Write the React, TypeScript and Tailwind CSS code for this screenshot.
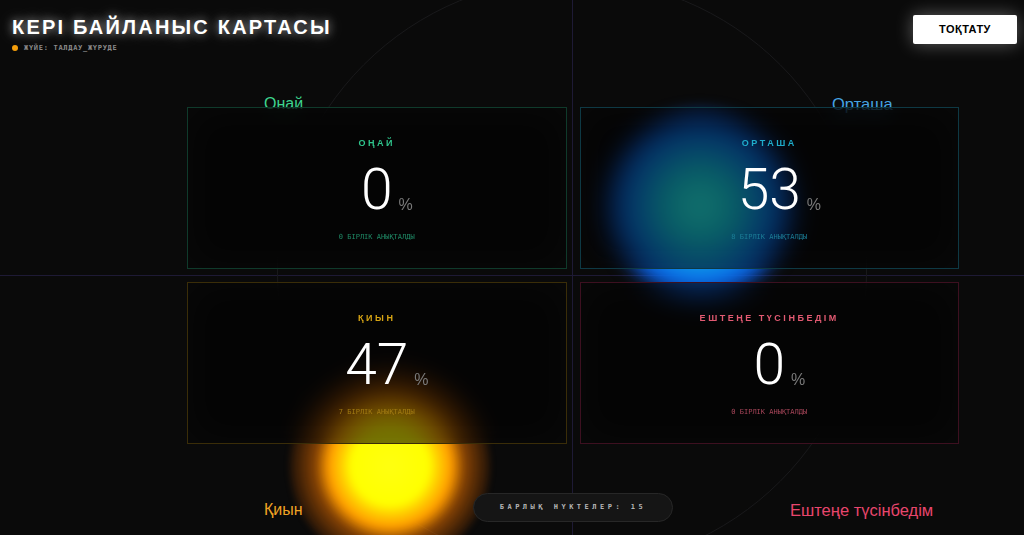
import React from 'react';

type Zone = {
  title: string;
  value: number;
  count: number;
  border: string;
  titleColor: string;
  subColor: string;
};

const zones: Zone[] = [
  { title: 'ОҢАЙ', value: 0, count: 0, border: 'border-[#0f3a2b]', titleColor: 'text-[#2fc48c]', subColor: 'text-[#1f8a66]' },
  { title: 'ОРТАША', value: 53, count: 8, border: 'border-[#0e3944]', titleColor: 'text-[#1eaccb]', subColor: 'text-[#1b7d96]' },
  { title: 'ҚИЫН', value: 47, count: 7, border: 'border-[#3a2d08]', titleColor: 'text-[#d6a414]', subColor: 'text-[#a07a12]' },
  { title: 'ЕШТЕҢЕ ТҮСІНБЕДІМ', value: 0, count: 0, border: 'border-[#3d1020]', titleColor: 'text-[#e25a72]', subColor: 'text-[#a8465a]' },
];

const ZoneCard: React.FC<{ zone: Zone }> = ({ zone }) => (
  <div
    className={`h-[162px] border ${zone.border} bg-black/55 backdrop-blur-[10px] shadow-[inset_0_0_40px_rgba(255,255,255,0.02)] flex flex-col items-center pt-[29px]`}
  >
    <div className={`text-[9px] leading-[12px] font-bold tracking-[0.28em] ${zone.titleColor}`}>{zone.title}</div>
    <div className="relative mt-[12px]">
      <span className="text-[57px] leading-none font-light text-white font-['Roboto',sans-serif]">{zone.value}</span>
      <span className="absolute left-full bottom-[5px] ml-[6px] text-[16px] leading-none text-[#7a7a7a]">%</span>
    </div>
    <div className={`mt-[15px] text-[7px] leading-[8px] font-['DejaVu_Sans_Mono',monospace] ${zone.subColor}`}>
      {zone.count} БІРЛІК АНЫҚТАЛДЫ
    </div>
  </div>
);

export default function App() {
  return (
    <div className="relative h-[535px] w-[1024px] overflow-hidden bg-[#0a0a0a] font-['Liberation_Sans',Arial,sans-serif]">
      {/* canvas: crosshair, orbit, glow nodes, quadrant labels */}
      <div className="absolute inset-0">
        <div className="absolute left-0 right-0 top-[275px] h-px bg-[#1e1a35]" />
        <div className="absolute top-0 bottom-0 left-[572px] w-px bg-[#1e1a35]" />
        <div className="absolute left-[277px] top-[-22px] h-[590px] w-[590px] rounded-full border border-[#19191b]" />

        <div className="absolute left-[608px] top-[114px] h-[184px] w-[184px] rounded-full bg-[radial-gradient(circle,#30fff8_0%,#16dce0_22%,#0c96e6_45%,#0a5ee8_62%,rgba(10,80,230,0.4)_76%,rgba(10,80,230,0)_90%)] blur-[9px]" />
        <div className="absolute left-[290px] top-[366px] h-[200px] w-[200px] rounded-full bg-[radial-gradient(circle,#ffff10_0%,#ffff00_27%,#ffd000_34%,#ff9c00_43%,rgba(230,110,0,0.55)_53%,rgba(160,70,0,0.25)_68%,rgba(160,70,0,0)_86%)] blur-[3px]" />

        <div className="absolute left-[264px] top-[92px] text-[16px] text-[#3dd68f]">Онай</div>
        <div className="absolute left-[832px] top-[92px] text-[16.5px] text-[#45a4e4]">Орташа</div>
        <div className="absolute left-[264px] top-[498px] text-[16px] text-[#f0a324]">Қиын</div>
        <div className="absolute left-[790px] top-[498px] text-[16.5px] text-[#e8466d]">Ештеңе түсінбедім</div>
      </div>

      <div className="relative z-10">
        <header className="flex items-start justify-between pl-3 pr-[7px] pt-[13px]">
          <div>
            <h1 className="text-[20px] leading-[28px] font-bold tracking-[0.11em] text-white [text-shadow:0_0_10px_rgba(255,255,255,0.6),0_0_20px_rgba(255,255,255,0.25)]">
              КЕРІ БАЙЛАНЫС КАРТАСЫ
            </h1>
            <div className="mt-[2px] flex items-center gap-[6px]">
              <span className="h-[6px] w-[6px] rounded-full bg-[#f59e0b]" />
              <span className="text-[7px] leading-[10px] font-bold tracking-[0.1em] text-[#8a8a8a] font-['DejaVu_Sans_Mono',monospace]">
                ЖҮЙЕ: ТАЛДАУ_ЖҮРУДЕ
              </span>
            </div>
          </div>
          <button className="mt-[2px] h-[29px] w-[104px] rounded-[2px] bg-white text-[11px] font-bold tracking-[0.04em] text-black shadow-[0_0_18px_rgba(255,255,255,0.35)]">
            ТОҚТАТУ
          </button>
        </header>

        <div className="flex justify-center pl-[122px] mt-[54px]">
          <div className="grid w-[772px] grid-cols-2 gap-[13px]">
            {zones.map((z) => (
              <ZoneCard key={z.title} zone={z} />
            ))}
          </div>
        </div>

        <div className="flex justify-center pl-[122px] mt-[49px]">
          <div className="flex h-[29px] w-[200px] items-center justify-center rounded-full border border-[#272727] bg-[#151515]">
            <span className="text-[7px] font-bold tracking-[0.5em] text-[#b5b5b5] font-['DejaVu_Sans_Mono',monospace]">
              БАРЛЫҚ НҮКТЕЛЕР: 15
            </span>
          </div>
        </div>
      </div>
    </div>
  );
}
